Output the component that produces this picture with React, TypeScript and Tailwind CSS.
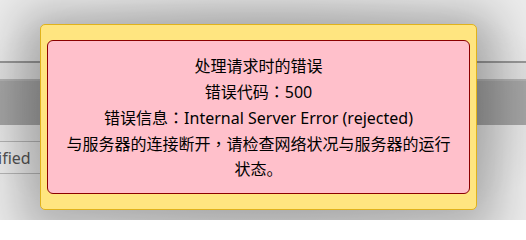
export default function App() {
  return (
    <div className="relative h-[220px] w-[526px] overflow-hidden bg-[#ececec] font-['Noto_Sans','Noto_Sans_CJK_SC',sans-serif]">
      {/* page behind the dialog */}
      <div className="pt-[61px]">
        <div className="h-[2px] bg-[#9a9a9a]" />
        <div className="h-[16px] bg-[#e4e4e4]" />
        <div className="h-[2px] bg-[#b5b5b5]" />
        <div className="h-[44px] bg-[#a9a9a9]" />
        <div className="w-[60px] overflow-hidden">
          <div className="h-[16px]" />
          <div className="h-px bg-[#b8b8b8]" />
          <div className="flex h-[31px] items-center whitespace-nowrap bg-[#eeeeee] text-[16px] text-[#555]">
            <span className="-ml-[2px]">ified</span>
          </div>
          <div className="h-px bg-[#b8b8b8]" />
        </div>
      </div>

      {/* overlay darkening */}
      <div className="pointer-events-none absolute inset-0 bg-[radial-gradient(ellipse_at_center,rgba(0,0,0,0.12)_35%,rgba(0,0,0,0)_85%)]" />

      {/* error dialog */}
      <div className="absolute left-[40px] top-[24px] w-[437px] rounded-[5px] border border-[#e0b21c] bg-[#ffe580] px-[6px] py-[15px] shadow-[0_6px_45px_20px_rgba(0,0,0,0.25)]">
        <div className="rounded-[6px] border border-[#8b0000] bg-[#ffc0cb] px-[14px] pb-[11px] pt-[13px] text-center text-[16px] leading-[25px] text-black">
          <div>处理请求时的错误</div>
          <div>
            错误代码<span className="font-['Noto_Sans_CJK_TC',sans-serif]">：</span>500
          </div>
          <div>
            错误信息<span className="font-['Noto_Sans_CJK_TC',sans-serif]">：</span>Internal Server Error (rejected)
          </div>
          <div>
            与服务器的连接断开<span className="font-['Noto_Sans_CJK_TC',sans-serif]">，</span>请检查网络状况与服务器的运行状态。
          </div>
        </div>
      </div>
    </div>
  );
}
